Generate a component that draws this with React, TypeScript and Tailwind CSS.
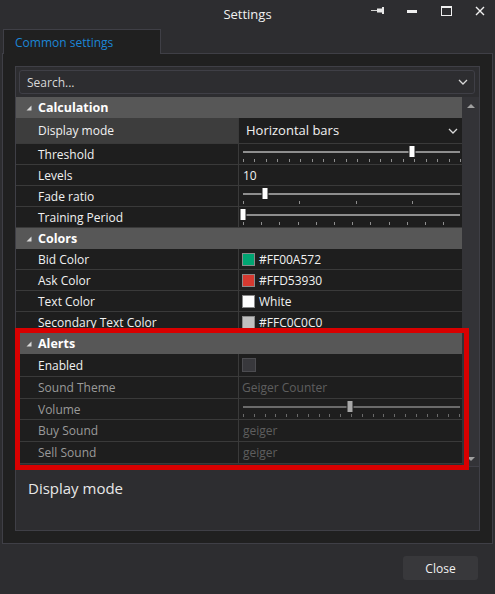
import React from "react";

const ROW_BORDER = "border-b border-[#3a3a3a]";

function Tri() {
  return (
    <svg width="6" height="6" viewBox="0 0 6 6" className="shrink-0">
      <polygon points="5.5,0.5 5.5,5.5 0.5,5.5" fill="#d8d8d8" />
    </svg>
  );
}

function Header({ title }: { title: string }) {
  return (
    <div className="h-[21px] bg-[#575757] flex items-center pl-[10px] gap-[6px]">
      <Tri />
      <span className="font-bold text-[12.5px] text-white leading-none pt-[1px]">{title}</span>
    </div>
  );
}

function Row({
  label,
  h = "h-[21px]",
  dim = false,
  labelBg = "bg-[#1e1e1e]",
  children,
}: {
  label: string;
  h?: string;
  dim?: boolean;
  labelBg?: string;
  children?: React.ReactNode;
}) {
  return (
    <div className={`${h} flex ${ROW_BORDER}`}>
      <div
        className={`w-[223px] shrink-0 border-r border-[#3a3a3a] flex items-center pl-[22px] pt-[1px] ${labelBg} ${
          dim ? "text-[#9a9a9a]" : "text-[#f1f1f1]"
        }`}
      >
        {label}
      </div>
      <div className="flex-1 bg-[#1e1e1e] flex items-center min-w-0">{children}</div>
    </div>
  );
}

function Slider({
  thumb,
  ticks,
  dim = false,
}: {
  thumb: number;
  ticks: number[];
  dim?: boolean;
}) {
  const track = dim ? "#6a6a6a" : "#8e8e8e";
  const thumbFill = dim ? "#a8a8a8" : "#ffffff";
  return (
    <svg width="222" height="20" viewBox="0 0 222 20" className="self-start">
      <rect x="4" y="7" width="217" height="2" fill={track} />
      {ticks.map((t, i) => (
        <rect key={i} x={Math.round(t)} y="15" width="1" height="3" fill={track} />
      ))}
      <rect x={thumb - 3} y="1.5" width="6" height="12" fill={thumbFill} stroke="#1e1e1e" strokeWidth="1" />
    </svg>
  );
}

function Swatch({ color, text }: { color: string; text: string }) {
  return (
    <div className="flex items-center pl-[3px] gap-[4px]">
      <div className="w-[13px] h-[13px] border border-[#8a8a8a]" style={{ backgroundColor: color }} />
      <span className="text-[#f1f1f1] pt-[1px]">{text}</span>
    </div>
  );
}

const range = (n: number, start: number, step: number) =>
  Array.from({ length: n }, (_, i) => start + step * i);

export default function App() {
  return (
    <div className="relative w-[495px] h-[594px] bg-[#2d2d30] flex flex-col text-[12px] text-[#f1f1f1] font-['Open_Sans','Noto_Sans',sans-serif] overflow-hidden">
      {/* Title bar */}
      <div className="h-[29px] grid grid-cols-[1fr_auto_1fr] items-center shrink-0">
        <div />
        <div className="text-[13px] text-[#f1f1f1]">Settings</div>
        <div className="flex justify-end items-center h-full">
          <div className="w-[34px] h-full flex items-center justify-center pb-[8px]">
            <svg width="15" height="9" viewBox="0 0 15 9">
              <rect x="0" y="4" width="6" height="1" fill="#d0d0d0" />
              <rect x="6" y="2.5" width="5" height="4" fill="#e8e8e8" />
              <rect x="11" y="1" width="2" height="7" fill="#e8e8e8" />
            </svg>
          </div>
          <div className="w-[34px] h-full flex items-center justify-center pb-[7px]">
            <svg width="10" height="3" viewBox="0 0 10 3">
              <rect x="0" y="0" width="10" height="3" fill="#f0f0f0" />
            </svg>
          </div>
          <div className="w-[34px] h-full flex items-center justify-center pb-[7px]">
            <svg width="11" height="10" viewBox="0 0 11 10">
              <rect x="0.5" y="0.5" width="10" height="9" fill="none" stroke="#f0f0f0" strokeWidth="1" />
              <rect x="0" y="0" width="11" height="2" fill="#f0f0f0" />
            </svg>
          </div>
          <div className="w-[34px] h-full flex items-center justify-center pb-[7px] mr-[-2px]">
            <svg width="10" height="10" viewBox="0 0 10 10">
              <path d="M1 1 L9 9 M9 1 L1 9" stroke="#f0f0f0" strokeWidth="1.4" />
            </svg>
          </div>
        </div>
      </div>

      {/* Tab strip */}
      <div className="h-[24px] flex shrink-0 relative z-10">
        <div className="ml-[3px] w-[158px] h-[25px] border-t border-l border-r border-[#3f3f46] bg-[#202020] flex items-center pl-[11px] pt-[1px] text-[#1c86d6]">
          Common settings
        </div>
      </div>

      {/* Panel */}
      <div className="mx-[2px] h-[491px] border border-[#3f3f46] bg-[#202020] px-[12px] pt-[12px] shrink-0">
        <div className="border border-[#3f3f46] bg-[#2d2d30] flex flex-col">
          {/* Search */}
          <div className="p-[3px] pr-[4px]">
            <div className="h-[24px] rounded-[3px] border border-[#3f3f46] bg-[#2d2d30] flex items-center justify-between pl-[7px] pr-[6px] text-[#d8d8d8]">
              <span className="pt-[1px]">Search...</span>
              <svg width="10" height="6" viewBox="0 0 10 6">
                <path d="M1 1 L5 5 L9 1" fill="none" stroke="#d8d8d8" strokeWidth="1.3" />
              </svg>
            </div>
          </div>

          {/* Grid */}
          <div className="h-[369px] flex">
            <div className="flex-1 flex flex-col bg-[#1e1e1e] min-w-0">
              <Header title="Calculation" />
              <Row label="Display mode" h="h-[26px]" labelBg="bg-[#3d3d3d]">
                <div className="flex-1 flex items-center justify-between pl-[7px] pr-[4px]">
                  <span className="text-[#f1f1f1] text-[13px] pt-[1px]">Horizontal bars</span>
                  <svg width="10" height="6" viewBox="0 0 10 6">
                    <path d="M1 1 L5 5 L9 1" fill="none" stroke="#d8d8d8" strokeWidth="1.3" />
                  </svg>
                </div>
              </Row>
              <Row label="Threshold">
                <Slider thumb={173} ticks={range(20, 4, 217 / 19)} />
              </Row>
              <Row label="Levels">
                <span className="pl-[4px] pt-[1px] text-[#f1f1f1]">10</span>
              </Row>
              <Row label="Fade ratio">
                <Slider thumb={26} ticks={range(4, 4, 56.3)} />
              </Row>
              <Row label="Training Period">
                <Slider thumb={4} ticks={range(12, 4, 18.2)} />
              </Row>
              <Header title="Colors" />
              <Row label="Bid Color">
                <Swatch color="#00a572" text="#FF00A572" />
              </Row>
              <Row label="Ask Color">
                <Swatch color="#d53930" text="#FFD53930" />
              </Row>
              <Row label="Text Color">
                <Swatch color="#ffffff" text="White" />
              </Row>
              <Row label="Secondary Text Color">
                <Swatch color="#c0c0c0" text="#FFC0C0C0" />
              </Row>
              <Header title="Alerts" />
              <Row label="Enabled" h="h-[23px]">
                <div className="ml-[3px] w-[14px] h-[14px] border border-[#4c4c50] bg-[#38383c]" />
              </Row>
              <Row label="Sound Theme" h="h-[22px]" dim>
                <span className="pl-[3px] pt-[1px] text-[#5e5e5e]">Geiger Counter</span>
              </Row>
              <Row label="Volume" dim>
                <Slider thumb={111} ticks={range(21, 4, 10.8)} dim />
              </Row>
              <Row label="Buy Sound" h="h-[22px]" dim>
                <span className="pl-[4px] pt-[1px] text-[#5e5e5e]">geiger</span>
              </Row>
              <Row label="Sell Sound" h="h-[22px]" dim>
                <span className="pl-[4px] pt-[1px] text-[#5e5e5e]">geiger</span>
              </Row>
              <div className="flex-1 bg-[#2d2d30]" />
            </div>
            {/* Scrollbar */}
            <div className="w-[17px] bg-[#333337] flex flex-col items-center justify-between pt-[7px] pb-[5px]">
              <svg width="8" height="4" viewBox="0 0 8 4">
                <polygon points="0,4 4,0 8,4" fill="#a0a0a0" />
              </svg>
              <svg width="8" height="4" viewBox="0 0 8 4">
                <polygon points="0,0 8,0 4,4" fill="#a0a0a0" />
              </svg>
            </div>
          </div>

          {/* Description */}
          <div className="h-[64px] border-t border-[#3f3f46] bg-[#2d2d30] pl-[12px] pt-[10px] text-[15px] text-[#e8e8e8]">
            Display mode
          </div>
        </div>
      </div>

      {/* Footer */}
      <div className="flex justify-end pr-[17px] pt-[12px]">
        <div className="w-[75px] h-[24px] rounded-[3px] bg-[#38383b] flex items-center justify-center text-[#f1f1f1] pt-[1px]">
          Close
        </div>
      </div>

      {/* Red annotation box */}
      <div className="absolute left-[15px] top-[328px] w-[454px] h-[142px] border-[5px] border-[#d90000] pointer-events-none" />
    </div>
  );
}
